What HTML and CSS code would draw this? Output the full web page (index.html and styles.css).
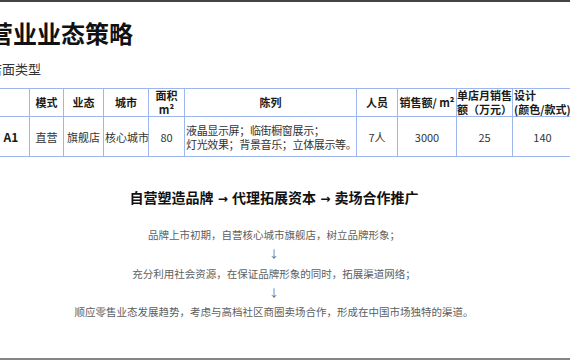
FILE: index.html
```html
<!DOCTYPE html>
<html lang="zh-CN">
<head>
<meta charset="utf-8">
<title>营业业态策略</title>
<link rel="stylesheet" href="styles.css">
</head>
<body>
<div class="page">
  <div class="content">
    <h1 class="title">营业业态策略</h1>
    <p class="subtitle">店面类型</p>
    <table class="grid">
      <colgroup>
        <col class="c-id"><col class="c-mode"><col class="c-type"><col class="c-city"><col class="c-area"><col class="c-display"><col class="c-staff"><col class="c-sales"><col class="c-month"><col class="c-design">
      </colgroup>
      <thead>
        <tr>
          <th></th>
          <th>模式</th>
          <th>业态</th>
          <th>城市</th>
          <th>面积<br>m²</th>
          <th>陈列</th>
          <th>人员</th>
          <th>销售额/ m²</th>
          <th class="tight">单店月销售<br>额（万元）</th>
          <th class="left">设计<br>(颜色/款式)</th>
        </tr>
      </thead>
      <tbody>
        <tr>
          <td class="strong">A1</td>
          <td>直营</td>
          <td>旗舰店</td>
          <td>核心城市</td>
          <td>80</td>
          <td class="left display">液晶显示屏；临街橱窗展示；<br>灯光效果；背景音乐；立体展示等。</td>
          <td>7人</td>
          <td>3000</td>
          <td>25</td>
          <td>140</td>
        </tr>
      </tbody>
    </table>
    <div class="flow">
      <h2 class="flow-title">自营塑造品牌 <span class="arrow">→</span> 代理拓展资本 <span class="arrow">→</span> 卖场合作推广</h2>
      <div class="steps">
        <p class="step">品牌上市初期，自营核心城市旗舰店，树立品牌形象；</p>
        <p class="step">↓</p>
        <p class="step">充分利用社会资源，在保证品牌形象的同时，拓展渠道网络；</p>
        <p class="step">↓</p>
        <p class="step">顺应零售业态发展趋势，考虑与高档社区商圈卖场合作，形成在中国市场独特的渠道。</p>
      </div>
    </div>
  </div>
</div>
</body>
</html>
```
FILE: styles.css
```css
html, body {
  margin: 0;
  padding: 0;
  background: #ffffff;
}

body {
  font-family: "Noto Sans CJK SC", "Noto Sans", sans-serif;
  color: #222;
}

.page {
  width: 570px;
  height: 360px;
  box-sizing: border-box;
  border-top: 2px solid #444;
  border-bottom: 2px solid #858585;
  overflow: hidden;
  background: #fff;
}

.content {
  width: 570px;
  margin-left: -11px;
}

.title {
  margin: 16px 0 0;
  font-size: 24px;
  line-height: 30px;
  font-weight: 700;
  color: #111;
}

.subtitle {
  margin: 12px 0 0;
  font-size: 13px;
  line-height: 18px;
  color: #333;
}

.grid {
  margin-top: 10px;
  width: 583px;
  table-layout: fixed;
  border-collapse: collapse;
  font-size: 11px;
}

.c-id { width: 40px; }
.c-mode { width: 34px; }
.c-type { width: 40px; }
.c-city { width: 45px; }
.c-area { width: 36px; }
.c-display { width: 172px; }
.c-staff { width: 41px; }
.c-sales { width: 59px; }
.c-month { width: 56px; }
.c-design { width: 60px; }

.grid th,
.grid td {
  border: 1px solid #9db6ee;
  padding: 0 1px;
  text-align: center;
  vertical-align: middle;
  white-space: nowrap;
  overflow: visible;
}

.grid th {
  height: 27px;
  line-height: 13.5px;
  font-weight: 700;
  color: #1a1a1a;
}

.grid td {
  height: 39px;
  line-height: 14px;
  color: #333;
}

.grid th.tight {
  padding: 0;
}

.grid .left {
  text-align: left;
}

.grid td.display {
  letter-spacing: -0.35px;
}

.grid td.strong {
  font-weight: 700;
  font-size: 12px;
  color: #1a1a1a;
  padding-left: 4px;
}

.flow {
  margin-top: 30px;
  text-align: center;
}

.flow-title {
  margin: 0;
  font-size: 14px;
  line-height: 20px;
  font-weight: 700;
  color: #111;
}

.arrow {
  font-family: "DejaVu Sans", sans-serif;
  font-size: 12px;
  padding: 0 1px;
}

.steps {
  margin-top: 16px;
}

.step {
  margin: 0;
  font-size: 10.5px;
  line-height: 19.3px;
  color: #5e5e5e;
}
```
